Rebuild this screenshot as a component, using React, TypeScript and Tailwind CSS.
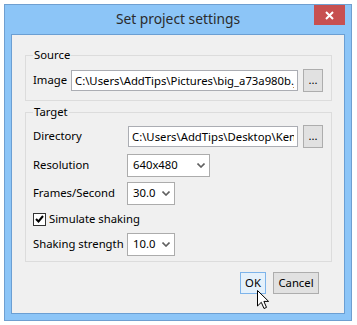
import React from "react";

const Chevron = () => (
  <svg width="8" height="5" viewBox="0 0 8 5" className="shrink-0">
    <path d="M0.5 0.5 L4 4 L7.5 0.5" fill="none" stroke="#606060" strokeWidth="1.6" />
  </svg>
);

const Select: React.FC<{ value: string; width: string }> = ({ value, width }) => (
  <div
    className={`${width} h-[23px] bg-white border border-[#acacac] flex items-center justify-between pl-[5px] pr-[4px]`}
  >
    <span>{value}</span>
    <Chevron />
  </div>
);

const PathInput: React.FC<{ value: string; width: string }> = ({ value, width }) => (
  <input
    readOnly
    value={value}
    className={`${width} h-[21px] bg-white border border-[#abadb3] px-[3px] outline-none text-black`}
  />
);

const BrowseButton = () => (
  <button
    type="button"
    className="w-[20px] h-[23px] bg-[#e1e1e1] border border-[#adadad] flex items-center justify-center leading-none pb-[2px]"
  >
    ...
  </button>
);

export default function App() {
  return (
    <div className="min-h-screen bg-white pt-[4px] pl-[4px] font-['Noto_Sans',sans-serif] text-[11.3px] text-black whitespace-nowrap">
      <div className="w-[348px] h-[317px] border border-[#6f9fd0] bg-[#8cc5f7] flex flex-col">
        {/* title bar */}
        <div className="h-[29px] grid grid-cols-[1fr_auto_1fr]">
          <div />
          <div className="flex items-center text-[13.8px] text-[#2b2b2b] pb-[1px]">
            Set project settings
          </div>
          <div className="flex justify-end items-start pr-[6px]">
            <button
              type="button"
              className="w-[31px] h-[20px] bg-[#c75050] flex items-center justify-center"
            >
              <svg width="9" height="9" viewBox="0 0 9 9">
                <path d="M1 1 L8 8 M8 1 L1 8" stroke="white" strokeWidth="2" />
              </svg>
            </button>
          </div>
        </div>

        {/* client area */}
        <div className="mx-[6px] h-[280px] border border-[#6b9fd3] bg-[#f0f0f0] flex flex-col">
          {/* Source */}
          <fieldset className="mt-[12px] ml-[13px] w-[307px] h-[54px] border border-[#dcdcdc] px-[7px]">
            <legend className="px-[1px] leading-[16px]">Source</legend>
            <div className="flex items-center h-[23px] mt-[6px]">
              <span className="w-[38px]">Image</span>
              <PathInput
                value="C:\Users\AddTips\Pictures\big_a73a980b.jpg"
                width="w-[227px]"
              />
              <div className="ml-[5px]">
                <BrowseButton />
              </div>
            </div>
          </fieldset>

          {/* Target */}
          <fieldset className="mt-[3px] ml-[13px] w-[307px] h-[158px] border border-[#dcdcdc] px-[7px]">
            <legend className="px-[1px] leading-[16px]">Target</legend>
            <div className="flex items-center h-[23px] mt-[5px]">
              <span className="w-[95px]">Directory</span>
              <PathInput
                value="C:\Users\AddTips\Desktop\Ken Burns"
                width="w-[170px]"
              />
              <div className="ml-[5px]">
                <BrowseButton />
              </div>
            </div>
            <div className="flex items-center h-[23px] mt-[6px]">
              <span className="w-[94px]">Resolution</span>
              <Select value="640x480" width="w-[83px]" />
            </div>
            <div className="flex items-center h-[23px] mt-[5px]">
              <span className="w-[94px]">Frames/Second</span>
              <Select value="30.0" width="w-[48px]" />
            </div>
            <div className="flex items-center h-[20px] mt-[4px]">
              <div className="w-[13px] h-[13px] border border-[#333333] bg-white flex items-center justify-center">
                <svg width="9" height="8" viewBox="0 0 9 8">
                  <path d="M1 4 L3.5 6.5 L8 1" fill="none" stroke="#000" strokeWidth="2" />
                </svg>
              </div>
              <span className="ml-[3px]">Simulate shaking</span>
            </div>
            <div className="flex items-center h-[23px] mt-[4px]">
              <span className="w-[94px]">Shaking strength</span>
              <Select value="10.0" width="w-[48px]" />
            </div>
          </fieldset>

          {/* buttons */}
          <div className="flex justify-end gap-[7px] mt-[10px] mr-[25px]">
            <button
              type="button"
              className="relative w-[26px] h-[22px] bg-[#e5f1fb] border border-[#7eb4ea] flex items-center justify-center"
            >
              OK
              <svg
                width="13"
                height="20"
                viewBox="0 0 13 20"
                className="absolute left-[16px] top-[17px]"
              >
                <path
                  d="M0.5 0.5 L0.5 16 L4.3 12.3 L7 18.5 L9.5 17.4 L6.9 11.4 L11.6 11.4 Z"
                  fill="white"
                  stroke="black"
                  strokeWidth="1"
                  strokeLinejoin="round"
                />
              </svg>
            </button>
            <button
              type="button"
              className="w-[46px] h-[22px] bg-[#e1e1e1] border border-[#adadad] flex items-center justify-center"
            >
              Cancel
            </button>
          </div>
        </div>
      </div>
    </div>
  );
}
